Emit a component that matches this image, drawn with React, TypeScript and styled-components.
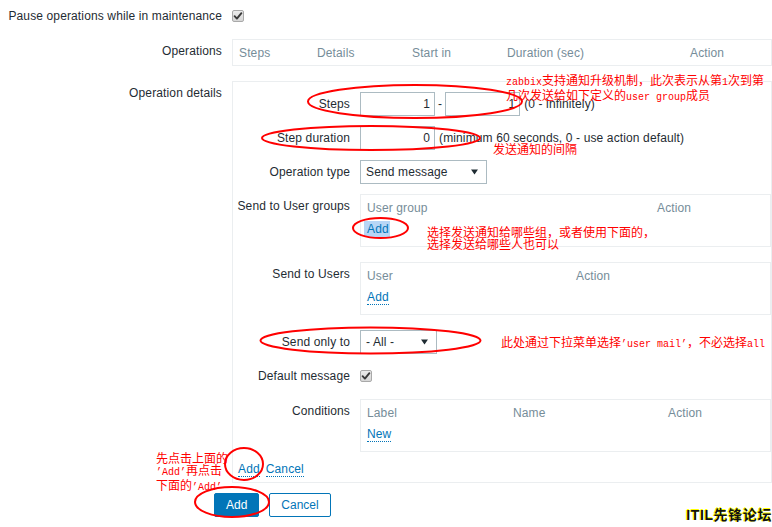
import React from 'react';
import styled, { createGlobalStyle } from 'styled-components';

const GlobalStyle = createGlobalStyle`
  html, body { margin: 0; padding: 0; background: #fff; }
  body {
    font-family: "Liberation Sans", Arial, sans-serif;
    font-size: 12px;
    letter-spacing: 0.13px;
    color: #1f2c33;
  }
  * { box-sizing: border-box; }
`;

const Page = styled.div`
  position: relative;
  width: 772px;
  height: 527px;
  overflow: hidden;
  padding-top: 4px;
`;

const FormRow = styled.div<{ $mb?: number }>`
  display: grid;
  grid-template-columns: 222px 540px;
  column-gap: 10px;
  margin-bottom: ${(p) => p.$mb ?? 0}px;
`;

const InnerRow = styled.div<{ $mb?: number }>`
  display: grid;
  grid-template-columns: 117px 1fr;
  column-gap: 10px;
  margin-bottom: ${(p) => p.$mb ?? 0}px;
`;

const Label = styled.div`
  text-align: right;
  line-height: 24px;
  white-space: nowrap;
  color: #1f2c33;
`;

const Field = styled.div`
  display: flex;
  align-items: center;
  height: 24px;
  white-space: nowrap;
`;

const CheckBox = styled.span`
  display: inline-flex;
  align-items: center;
  justify-content: center;
  width: 12px;
  height: 12px;
  border: 1px solid #a9a9a9;
  border-radius: 2px;
  background: linear-gradient(#ececec, #d6d6d6);
`;

const Checkbox = () => (
  <CheckBox>
    <svg width="10" height="10" viewBox="0 0 10 10">
      <path d="M1.6 5.2 L3.9 7.6 L8.4 2.2" fill="none" stroke="#3a3a3a" strokeWidth="1.9" strokeLinecap="round" strokeLinejoin="round" />
    </svg>
  </CheckBox>
);

const Table = styled.div<{ $pb: number }>`
  border: 1px solid #ebeef0;
  padding: 3px 6px ${(p) => p.$pb}px;
`;

const HeaderGrid = styled.div<{ $cols: string }>`
  display: grid;
  grid-template-columns: ${(p) => p.$cols};
  line-height: 20px;
  color: #768d99;
  white-space: nowrap;
`;

const LinkRow = styled.div`
  margin-top: 2px;
  line-height: 18px;
`;

const Link = styled.span<{ $selected?: boolean }>`
  color: #0275b8;
  cursor: pointer;
  border-bottom: ${(p) => (p.$selected ? 'none' : '1px dotted #0275b8')};
  background: ${(p) => (p.$selected ? '#b7d6f6' : 'transparent')};
  padding: ${(p) => (p.$selected ? '1px 1px 1px 3px' : '0')};
  margin-left: ${(p) => (p.$selected ? '-3px' : '0')};
`;

const DetailsBox = styled.div`
  border: 1px solid #ebeef0;
  padding: 10px 0 0;
`;

const NumInput = styled.input`
  width: 75px;
  height: 24px;
  border: 1px solid #acbbc2;
  padding: 0 4px;
  text-align: right;
  font: inherit;
  color: #1f2c33;
  background: #fff;
  outline: none;
  margin: 0;
`;

const Dash = styled.span`
  margin: 0 3px;
`;

const Hint = styled.span`
  margin-left: 4px;
`;

const Select = styled.div<{ $w: number }>`
  display: flex;
  align-items: center;
  justify-content: space-between;
  width: ${(p) => p.$w}px;
  height: 24px;
  border: 1px solid #acbbc2;
  padding: 0 8px 0 5px;
  color: #1f2c33;
  background: #fff;
`;

const Arrow = () => (
  <svg width="7" height="6" viewBox="0 0 7 6">
    <polygon points="0,0.5 7,0.5 3.5,5.5" fill="#1f2c33" />
  </svg>
);

const LinkBar = styled.div`
  display: flex;
  align-items: center;
  gap: 6px;
  height: 25px;
  padding-left: 5px;
`;

const ButtonRow = styled.div`
  display: flex;
  gap: 10px;
  margin-top: 10px;
  padding-left: 214px;
`;

const Button = styled.button<{ $primary?: boolean }>`
  height: 24px;
  padding: 0 11px;
  font: inherit;
  border: 1px solid #0275b8;
  border-radius: 2px;
  background: ${(p) => (p.$primary ? '#0275b8' : '#fff')};
  color: ${(p) => (p.$primary ? '#fff' : '#0275b8')};
  cursor: pointer;
`;

const Overlay = styled.svg`
  position: absolute;
  left: 0;
  top: 0;
  pointer-events: none;
`;

const Note = styled.div<{ $x: number; $y: number }>`
  position: absolute;
  left: ${(p) => p.$x}px;
  top: ${(p) => p.$y}px;
  color: #ff0000;
  font-family: "Noto Sans CJK SC", sans-serif;
  font-size: 12px;
  line-height: 12px;
  letter-spacing: 0;
  white-space: nowrap;
  pointer-events: none;
`;

const Latin = styled.span`
  font-family: "Liberation Mono", monospace;
  font-size: 10px;
`;

const Watermark = styled.div`
  position: absolute;
  right: 0;
  bottom: 4px;
  font-family: "Liberation Sans", "Noto Sans CJK SC", sans-serif;
  font-weight: bold;
  font-size: 14px;
  line-height: 16px;
  letter-spacing: 0.6px;
  color: #111;
  text-shadow: -1px 0 0 #ffff00, 0 -1px 0 #ffff00;
  white-space: nowrap;
`;

const ellipses = [
  { cx: 415, cy: 101.5, rx: 107, ry: 16.5 },
  { cx: 371, cy: 138, rx: 109, ry: 12 },
  { cx: 380.5, cy: 228, rx: 27.5, ry: 10 },
  { cx: 370.5, cy: 340.5, rx: 110, ry: 13 },
  { cx: 244, cy: 464, rx: 19, ry: 16 },
  { cx: 232, cy: 502, rx: 37, ry: 15 },
];

export default function App() {
  return (
    <>
      <GlobalStyle />
      <Page>
        <FormRow $mb={11}>
          <Label>Pause operations while in maintenance</Label>
          <Field>
            <Checkbox />
          </Field>
        </FormRow>

        <FormRow $mb={15}>
          <Label>Operations</Label>
          <Table $pb={2}>
            <HeaderGrid $cols="78px 95px 95px 183px auto">
              <span>Steps</span>
              <span>Details</span>
              <span>Start in</span>
              <span>Duration (sec)</span>
              <span>Action</span>
            </HeaderGrid>
          </Table>
        </FormRow>

        <FormRow>
          <Label>Operation details</Label>
          <DetailsBox>
            <InnerRow $mb={10}>
              <Label>Steps</Label>
              <Field>
                <NumInput value="1" readOnly />
                <Dash>-</Dash>
                <NumInput value="1" readOnly />
                <Hint>(0 - infinitely)</Hint>
              </Field>
            </InnerRow>

            <InnerRow $mb={10}>
              <Label>Step duration</Label>
              <Field>
                <NumInput value="0" readOnly />
                <Hint>(minimum 60 seconds, 0 - use action default)</Hint>
              </Field>
            </InnerRow>

            <InnerRow $mb={10}>
              <Label>Operation type</Label>
              <Field>
                <Select $w={127}>
                  <span>Send message</span>
                  <Arrow />
                </Select>
              </Field>
            </InnerRow>

            <InnerRow $mb={15}>
              <Label>Send to User groups</Label>
              <Table $pb={8}>
                <HeaderGrid $cols="290px auto">
                  <span>User group</span>
                  <span>Action</span>
                </HeaderGrid>
                <LinkRow>
                  <Link $selected>Add</Link>
                </LinkRow>
              </Table>
            </InnerRow>

            <InnerRow $mb={15}>
              <Label>Send to Users</Label>
              <Table $pb={8}>
                <HeaderGrid $cols="209px auto">
                  <span>User</span>
                  <span>Action</span>
                </HeaderGrid>
                <LinkRow>
                  <Link>Add</Link>
                </LinkRow>
              </Table>
            </InnerRow>

            <InnerRow $mb={10}>
              <Label>Send only to</Label>
              <Field>
                <Select $w={77}>
                  <span>- All -</span>
                  <Arrow />
                </Select>
              </Field>
            </InnerRow>

            <InnerRow $mb={11}>
              <Label>Default message</Label>
              <Field>
                <Checkbox />
              </Field>
            </InnerRow>

            <InnerRow $mb={5}>
              <Label>Conditions</Label>
              <Table $pb={8}>
                <HeaderGrid $cols="146px 155px auto">
                  <span>Label</span>
                  <span>Name</span>
                  <span>Action</span>
                </HeaderGrid>
                <LinkRow>
                  <Link>New</Link>
                </LinkRow>
              </Table>
            </InnerRow>

            <LinkBar>
              <Link>Add</Link>
              <Link>Cancel</Link>
            </LinkBar>
          </DetailsBox>
        </FormRow>

        <ButtonRow>
          <Button $primary>Add</Button>
          <Button>Cancel</Button>
        </ButtonRow>

        <Overlay width="772" height="527" viewBox="0 0 772 527">
          {ellipses.map((e, i) => (
            <ellipse key={i} cx={e.cx} cy={e.cy} rx={e.rx} ry={e.ry} fill="none" stroke="#ff0000" strokeWidth="2" />
          ))}
        </Overlay>

        <Note $x={506} $y={74}>
          <Latin>zabbix</Latin>支持通知升级机制，此次表示从第<Latin>1</Latin>次到第
          <br />
          几次发送给如下定义的<Latin>user group</Latin>成员
        </Note>
        <Note $x={493} $y={143}>发送通知的间隔</Note>
        <Note $x={427} $y={226}>
          选择发送通知给哪些组，或者使用下面的，
          <br />
          选择发送给哪些人也可以
        </Note>
        <Note $x={501} $y={336}>
          此处通过下拉菜单选择<Latin>’user mail’</Latin>，不必选择<Latin>all</Latin>
        </Note>
        <Note $x={156} $y={452}>
          先点击上面的
          <br />
          <Latin>’Add’</Latin>再点击
          <br />
          下面的<Latin>’Add’</Latin>
        </Note>

        <Watermark>ITIL先锋论坛</Watermark>
      </Page>
    </>
  );
}
